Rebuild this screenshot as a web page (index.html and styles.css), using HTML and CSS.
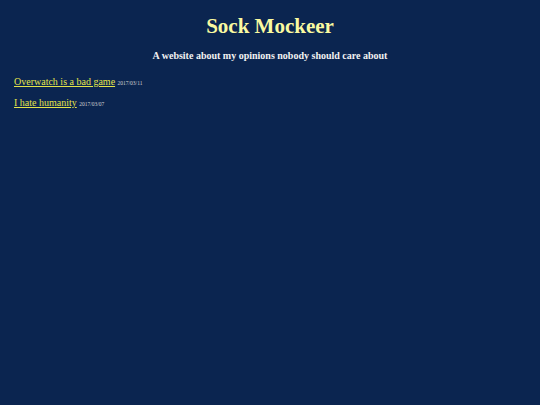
FILE: index.html
```html
<!DOCTYPE html>
<html>
<head>
<meta charset="utf-8">
<link rel="stylesheet" href="styles.css">
</head>
<body>
<header class="head">
<h1 class="title">Sock Mockeer</h1>
<h2 class="sub">A website about my opinions nobody should care about</h2>
</header>
<ul class="posts">
<li class="post"><a class="link" href="#">Overwatch is a bad game</a> <span class="date">2017/03/11</span></li>
<li class="post"><a class="link" href="#">I hate humanity</a> <span class="date">2017/03/07</span></li>
</ul>
</body>
</html>
```
FILE: styles.css
```css
html { background: #0b2550; }
body {
  margin: 0;
  padding: 8px 14px;
  font-family: "Liberation Serif", "Times New Roman", serif;
  color: #ffffff;
  background: #0b2550;
}
.head { text-align: center; }
.title {
  font-size: 21px;
  color: #fafaa0;
  margin: 6px 0 0;
  line-height: 24px;
}
.sub {
  font-size: 10px;
  color: #f2f2f2;
  margin: 11px 0 0;
  line-height: 14px;
}
.posts { list-style: none; padding: 0; margin: 13px 0 0; }
.post { font-size: 10px; line-height: 12px; margin-bottom: 9px; }
.link, .link:visited { color: #e4e44a; text-decoration: underline; }
.date { font-size: 5.5px; line-height: 1; color: #d0d0d0; }
```
